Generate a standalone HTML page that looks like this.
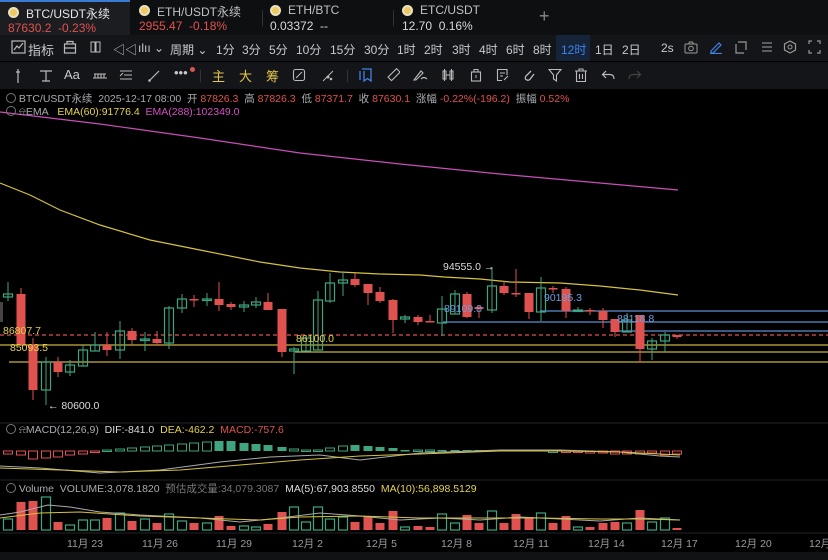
<!DOCTYPE html>
<html><head><meta charset="utf-8">
<style>
*{margin:0;padding:0;box-sizing:border-box}
body{width:828px;height:560px;background:#000;overflow:hidden;font-family:"Liberation Sans","Noto Sans CJK SC",sans-serif;color:#c8c9cc;position:relative}
.abs{position:absolute;white-space:nowrap}
#tabs{position:absolute;left:0;top:0;width:828px;height:35px;background:#0e0f11}
.tab{position:absolute;top:0;height:35px}
.tab .n{position:absolute;left:26px;top:3px;font-size:12px;color:#bfc1c5}
.tab .p{position:absolute;left:8px;top:19px;font-size:12px}
.coin{position:absolute;left:8px;top:5px;width:11px;height:11px;border-radius:50%;background:#f0c861;border:2px solid #e9e1c4}
#r2{position:absolute;left:0;top:35px;width:828px;height:26px;background:#141518}
#r3{position:absolute;left:0;top:62px;width:828px;height:27px;background:#141518}
.t{position:absolute;top:6px;font-size:12px;color:#c8c9cc}
.y{color:#e6c74a}
.red{color:#e0524f}
.info{font-size:10.5px;color:#a9abaf}
</style></head><body>
<div id="tabs">
 <div class="tab" style="left:0;width:130px;background:#1c1d20;border-top:2px solid #3a7bd5"><div class="coin"></div><div class="n" style="color:#e4e5e7">BTC/USDT永续</div><div class="p red">87630.2&nbsp; -0.23%</div></div>
 <div class="tab" style="left:131px;width:130px"><div class="coin"></div><div class="n">ETH/USDT永续</div><div class="p red">2955.47&nbsp; -0.18%</div></div>
 <div class="abs" style="left:262px;top:10px;width:1px;height:16px;background:#333"></div>
 <div class="tab" style="left:262px;width:130px"><div class="coin"></div><div class="n">ETH/BTC</div><div class="p" style="color:#d8d9dc">0.03372&nbsp; --</div></div>
 <div class="abs" style="left:393px;top:10px;width:1px;height:16px;background:#333"></div>
 <div class="tab" style="left:394px;width:130px"><div class="coin"></div><div class="n">ETC/USDT</div><div class="p" style="color:#d8d9dc">12.70&nbsp; 0.16%</div></div>
 <div class="abs" style="left:539px;top:6px;font-size:18px;color:#888">+</div>
</div>
<div id="r2">
 <svg class="abs" style="left:11px;top:5px" width="15" height="14"><rect x="1" y="1" width="13" height="12" fill="none" stroke="#bbb" stroke-width="1.2"/><path d="M3 10 L6 6 L8 8 L12 3" fill="none" stroke="#bbb" stroke-width="1.2"/></svg>
 <div class="t" style="left:28px;top:5px;font-size:13px">指标</div>
 <svg class="abs" style="left:63px;top:5px" width="14" height="14"><rect x="1.5" y="4" width="11" height="9" fill="none" stroke="#bbb" stroke-width="1.2"/><path d="M4 4 V1.5 H10 V4 M1.5 8 H12.5" fill="none" stroke="#bbb" stroke-width="1.2"/></svg>
 <svg class="abs" style="left:90px;top:5px" width="12" height="14"><rect x="1" y="2" width="4" height="10" fill="none" stroke="#bbb"/><rect x="6" y="2" width="4" height="10" fill="none" stroke="#bbb"/></svg>
 <div class="t" style="left:113px;font-size:12px">◁◁</div>
 <div class="t" style="left:138px">ılıı ⌄</div>
 <div class="t" style="left:170px">周期 ⌄</div>
 <div class="t" style="left:216px">1分</div><div class="t" style="left:242px">3分</div><div class="t" style="left:269px">5分</div><div class="t" style="left:296px">10分</div><div class="t" style="left:330px">15分</div><div class="t" style="left:364px">30分</div><div class="t" style="left:397px">1时</div><div class="t" style="left:424px">2时</div><div class="t" style="left:452px">3时</div><div class="t" style="left:479px">4时</div><div class="t" style="left:506px">6时</div><div class="t" style="left:533px">8时</div>
 <div class="abs" style="left:556px;top:0;width:34px;height:26px;background:#16243a"></div>
 <div class="t" style="left:561px;color:#3f82e8">12时</div>
 <div class="t" style="left:595px">1日</div><div class="t" style="left:622px">2日</div>
 <div class="t" style="left:661px">2s</div>
 <svg class="abs" style="left:684px;top:6px" width="14" height="13"><rect x="1" y="3" width="12" height="9" rx="1" fill="none" stroke="#999"/><circle cx="7" cy="7.5" r="2.3" fill="none" stroke="#999"/><path d="M4.5 3 L5.5 1 H8.5 L9.5 3" fill="none" stroke="#999"/></svg>
 <svg class="abs" style="left:709px;top:5px" width="14" height="14"><path d="M2 11 L10 3 L12 5 L4 13 H2 Z M1 13.5 H13" fill="none" stroke="#3f82e8" stroke-width="1.2"/></svg>
 <svg class="abs" style="left:734px;top:5px" width="14" height="14"><path d="M4 2 H12 V10 M2 4 V13 H10" fill="none" stroke="#999" stroke-width="1.2"/></svg>
 <svg class="abs" style="left:761px;top:6px" width="12" height="12"><path d="M1 2H11M1 6H11M1 10H11" stroke="#888" stroke-width="1.2"/></svg>
 <svg class="abs" style="left:783px;top:5px" width="14" height="14"><path d="M7 1 L12.5 4 V10 L7 13 L1.5 10 V4 Z" fill="none" stroke="#999" stroke-width="1.2"/><circle cx="7" cy="7" r="2" fill="none" stroke="#999"/></svg>
 <svg class="abs" style="left:808px;top:5px" width="13" height="14"><path d="M1 4V1H4M9 1H12V4M12 10V13H9M4 13H1V10" fill="none" stroke="#999" stroke-width="1.2"/></svg>
</div>
<div id="r3">
 <svg class="abs" style="left:14px;top:6px" width="8" height="16"><path d="M4 1V15M2 4H6" stroke="#bbb" stroke-width="1.2"/></svg>
 <svg class="abs" style="left:39px;top:7px" width="14" height="14"><path d="M1 2H13M7 2V12M3 12H11" stroke="#bbb" stroke-width="1.2"/></svg>
 <div class="t" style="left:64px;top:5px;font-size:13px">Aa</div>
 <svg class="abs" style="left:92px;top:8px" width="16" height="10"><path d="M1 8H15M2 4H14M3 4V8M6 4V8M9 4V8M12 4V8" stroke="#bbb" stroke-width="1.1"/></svg>
 <svg class="abs" style="left:119px;top:7px" width="14" height="12"><path d="M1 2H13M5 6H13M1 10H13M1 7L4 4" stroke="#bbb" stroke-width="1.1"/></svg>
 <svg class="abs" style="left:147px;top:7px" width="14" height="14"><path d="M2 12L12 2" stroke="#bbb" stroke-width="1.2"/><circle cx="2.5" cy="11.5" r="1.3" fill="#bbb"/></svg>
 <div class="t" style="left:174px;top:3px;font-size:13px">•••</div>
 <div class="abs" style="left:190px;top:5px;width:5px;height:5px;border-radius:50%;background:#e0524f"></div>
 <div class="abs" style="left:200px;top:8px;width:1px;height:12px;background:#333"></div>
 <div class="t y" style="left:212px;top:4px;font-size:13px">主</div>
 <div class="t y" style="left:239px;top:4px;font-size:13px">大</div>
 <div class="t y" style="left:266px;top:4px;font-size:13px">筹</div>
 <svg class="abs" style="left:292px;top:6px" width="14" height="14"><rect x="1.5" y="1.5" width="11" height="11" rx="2" fill="none" stroke="#bbb" stroke-width="1.1"/><path d="M4 10L10 4" stroke="#bbb"/></svg>
 <svg class="abs" style="left:321px;top:7px" width="14" height="14"><path d="M2 12L12 2" stroke="#bbb"/><circle cx="7" cy="8" r="1.5" fill="#bbb"/><circle cx="10" cy="10" r="1.3" fill="#bbb"/></svg>
 <div class="abs" style="left:347px;top:8px;width:1px;height:12px;background:#333"></div>
 <svg class="abs" style="left:359px;top:6px" width="14" height="15"><path d="M3 1H12V13L8.5 10.5L5 13V3 M1 3V12" fill="none" stroke="#3f82e8" stroke-width="1.3"/></svg>
 <svg class="abs" style="left:386px;top:6px" width="14" height="14"><rect x="2" y="5" width="12" height="5" transform="rotate(-45 7 7)" fill="none" stroke="#bbb" stroke-width="1.1"/></svg>
 <svg class="abs" style="left:412px;top:6px" width="16" height="14"><path d="M2 12L9 3L11 5L4 12Z M9 11Q12 8 15 11" fill="none" stroke="#bbb" stroke-width="1.1"/></svg>
 <svg class="abs" style="left:440px;top:6px" width="16" height="14"><rect x="3" y="3" width="3" height="8" fill="none" stroke="#bbb"/><rect x="10" y="3" width="3" height="8" fill="none" stroke="#bbb"/><path d="M4.5 1V13M11.5 1V13M6 7H10" stroke="#bbb"/></svg>
 <svg class="abs" style="left:470px;top:6px" width="12" height="15"><rect x="1.5" y="4" width="9" height="9" fill="none" stroke="#bbb" stroke-width="1.1"/><path d="M6 7V10M4 4V1.5H8V4" fill="none" stroke="#bbb"/></svg>
 <svg class="abs" style="left:496px;top:6px" width="14" height="14"><path d="M11 7V1.5H1.5V12.5H6 M4 5H9M4 8H7M8 12L12 8" fill="none" stroke="#bbb" stroke-width="1.1"/></svg>
 <svg class="abs" style="left:522px;top:6px" width="14" height="14"><path d="M9 3L4 8Q2 11 5 12Q7 13 9 10L12 6" fill="none" stroke="#bbb" stroke-width="1.3"/></svg>
 <svg class="abs" style="left:548px;top:6px" width="14" height="14"><path d="M1 1.5H13L8.5 7V13L5.5 11V7Z" fill="none" stroke="#bbb" stroke-width="1.1"/></svg>
 <svg class="abs" style="left:574px;top:6px" width="14" height="15"><path d="M1 3H13M5 3V1H9V3M2.5 3V13.5H11.5V3M5.5 6V11M8.5 6V11" fill="none" stroke="#bbb" stroke-width="1.1"/></svg>
 <svg class="abs" style="left:601px;top:8px" width="14" height="10"><path d="M5 1L1.5 4.5L5 8M1.5 4.5H9Q13 4.5 13 9" fill="none" stroke="#bbb" stroke-width="1.2"/></svg>
 <svg class="abs" style="left:628px;top:8px" width="14" height="10"><path d="M9 1L12.5 4.5L9 8M12.5 4.5H5Q1 4.5 1 9" fill="none" stroke="#444" stroke-width="1.2"/></svg>
</div>

<svg class="abs" style="left:0;top:89px" width="828" height="471" id="ch"></svg>

<div class="abs info" style="left:6px;top:91px"><span style="display:inline-block;width:10px;height:10px;border:1px solid #777;border-radius:50%;vertical-align:-1px"></span> BTC/USDT永续&nbsp; 2025-12-17 08:00&nbsp; 开 <span class="red">87826.3</span>&nbsp; 高 <span class="red">87826.3</span>&nbsp; 低 <span class="red">87371.7</span>&nbsp; 收 <span class="red">87630.1</span>&nbsp; 涨幅 <span class="red">-0.22%(-196.2)</span>&nbsp; 振幅 <span class="red">0.52%</span></div>
<div class="abs info" style="left:6px;top:106px"><span style="display:inline-block;width:10px;height:10px;border:1px solid #777;border-radius:50%;vertical-align:-1px"></span> ⍾EMA&nbsp;&nbsp; <span style="color:#e6d34a">EMA(60):91776.4</span>&nbsp; <span style="color:#d34fc4">EMA(288):102349.0</span></div>
<div class="abs info" style="left:6px;top:424px"><span style="display:inline-block;width:10px;height:10px;border:1px solid #777;border-radius:50%;vertical-align:-1px"></span> ⍾MACD(12,26,9)&nbsp; <span style="color:#ddd">DIF:-841.0</span>&nbsp; <span style="color:#e6d34a">DEA:-462.2</span>&nbsp; <span class="red">MACD:-757.6</span></div>
<div class="abs info" style="left:6px;top:481px"><span style="display:inline-block;width:10px;height:10px;border:1px solid #777;border-radius:50%;vertical-align:-1px"></span> Volume&nbsp; VOLUME:3,078.1820&nbsp; <span style="color:#777">预估成交量:34,079.3087</span>&nbsp; <span style="color:#ddd">MA(5):67,903.8550</span>&nbsp; <span style="color:#e6d34a">MA(10):56,898.5129</span></div>
<div class="abs" style="left:0;top:552px;width:828px;height:8px;background:#111214"></div>

<script>
var C=[[8,294,297,282,301,'g'],[21,294,345,288,345,'r'],[33,345,390,338,400,'r'],[46,362,390,357,405,'g'],[58,362,372,357,377,'r'],[70,365,372,360,376,'g'],[83,350,366,345,366,'g'],[95,345,351,332,351,'g'],[107,345,350,332,356,'r'],[120,331,350,321,359,'g'],[132,331,340,328,345,'r'],[145,339,340,332,351,'g'],[157,339,343,331,345,'r'],[169,308,343,306,349,'g'],[182,299,308,294,313,'g'],[194,299,300,295,307,'r'],[207,299,300,293,306,'g'],[219,299,305,282,311,'r'],[231,304,307,302,310,'r'],[244,305,307,301,312,'g'],[256,302,305,297,308,'g'],[268,302,310,293,310,'r'],[282,309,352,309,357,'r'],[294,349,351,347,374,'g'],[306,338,351,336,351,'g'],[318,300,350,291,350,'g'],[330,283,301,273,303,'g'],[343,280,283,272,296,'g'],[355,279,285,273,287,'r'],[368,284,293,284,305,'r'],[380,292,301,287,303,'r'],[393,300,320,299,333,'r'],[405,317,319,315,323,'g'],[418,317,322,315,325,'r'],[430,321,322,315,322,'r'],[442,309,323,296,336,'g'],[455,294,314,290,314,'g'],[467,294,317,292,318,'r'],[479,307,309,305,318,'r'],[492,286,310,267,313,'g'],[504,286,293,281,295,'r'],[516,293,294,269,297,'r'],[529,293,312,293,319,'r'],[541,288,312,277,321,'g'],[553,288,289,286,293,'r'],[566,289,311,287,318,'r'],[578,310,311,307,312,'g'],[590,310,311,308,315,'r'],[603,311,320,308,328,'r'],[615,319,332,319,337,'r'],[627,320,332,313,332,'g'],[640,315,349,315,362,'r'],[652,341,349,338,360,'g'],[665,335,341,332,352,'g'],[677,335,337,335,339,'r']];
var V=[[8,519,'g'],[21,502,'r'],[33,501,'r'],[46,497,'g'],[58,522,'r'],[70,525,'g'],[83,520,'g'],[95,520,'g'],[107,518,'r'],[120,513,'g'],[132,521,'r'],[145,519,'g'],[157,523,'r'],[169,514,'g'],[182,521,'g'],[194,523,'r'],[207,523,'g'],[219,516,'r'],[231,526,'r'],[244,526,'g'],[256,527,'g'],[268,524,'r'],[282,512,'r'],[294,507,'g'],[306,522,'g'],[318,507,'g'],[330,519,'g'],[343,517,'g'],[355,522,'r'],[368,517,'r'],[380,523,'r'],[393,511,'r'],[405,527,'g'],[418,526,'r'],[430,527,'r'],[442,514,'g'],[455,523,'g'],[467,515,'r'],[479,523,'r'],[492,511,'g'],[504,523,'r'],[516,514,'r'],[529,517,'r'],[541,513,'g'],[553,523,'r'],[566,516,'r'],[578,527,'g'],[590,527,'r'],[603,523,'r'],[615,522,'r'],[627,523,'g'],[640,510,'r'],[652,522,'g'],[665,518,'g'],[677,528,'r']];
var R='#e0524f',G='#3fa57f',o=89,s='';
function L(pts,c,w){s+='<polyline fill="none" stroke="'+c+'" stroke-width="'+(w||1.2)+'" points="'+pts.map(function(p){return p[0]+','+(p[1]-o)}).join(' ')+'"/>';}
function H(x1,x2,y,c,d){s+='<line x1="'+x1+'" x2="'+x2+'" y1="'+(y-o)+'" y2="'+(y-o)+'" stroke="'+c+'" stroke-width="1.3"'+(d?' stroke-dasharray="4,3"':'')+'/>';}
function T(x,y,t,c,sz){s+='<text x="'+x+'" y="'+(y-o)+'" fill="'+c+'" font-size="'+(sz||10.5)+'" font-family="Liberation Sans,Noto Sans CJK SC,sans-serif">'+t+'</text>';}
H(0,828,423,'#1c1d20');H(0,828,480,'#1c1d20');H(0,828,533,'#1c1d20');
L([[0,112],[100,124],[200,138],[300,153],[400,164],[500,174],[600,183],[678,190]],'#c94fb8');
L([[0,183],[30,195],[60,210],[100,225],[150,240],[200,250],[260,262],[300,268],[340,272],[380,274],[420,275],[444,277],[480,279],[510,282],[560,283],[600,286],[640,290],[678,295]],'#d6c23c');
H(0,828,335,R,1);H(0,828,345,'#c8b43c');H(295,828,352,'#c8b43c');H(9,828,362,'#c8b43c');
H(540,828,311,'#5b8fd0');H(443,828,322,'#5b8fd0');H(617,828,331,'#5b8fd0');
C.forEach(function(c){var col=c[5]=='g'?G:R;s+='<line x1="'+c[0]+'" x2="'+c[0]+'" y1="'+(c[3]-o)+'" y2="'+(c[4]-o)+'" stroke="'+col+'"/>';var h=Math.max(1.5,c[2]-c[1]);if(c[5]=='g')s+='<rect x="'+(c[0]-4.5)+'" y="'+(c[1]-o)+'" width="9" height="'+h+'" fill="none" stroke="'+G+'" stroke-width="1.2"/>';else s+='<rect x="'+(c[0]-4.5)+'" y="'+(c[1]-o)+'" width="9" height="'+h+'" fill="'+R+'"/>';});
T(3,334,'86807.7','#e6d34a');T(10,351,'85093.5','#e6d34a');T(296,342,'86100.0','#e6d34a');
T(444,312,'89109.8','#6a9fe0');T(544,301,'90195.3','#6a9fe0');T(617,322,'88118.8','#6a9fe0');
T(443,270,'94555.0 →','#ddd');T(48,409,'← 80600.0','#ddd');
s+='<rect x="0" y="'+(302-o)+'" width="3" height="20" fill="#444"/>';
var mz=451;
C.forEach(function(c,i){var x=c[0];
 var v=[ -3,-4,-8,-7,-6,-4,-3,-1, 1,2,3,4,5,6,7,8,9,10,10,8,7,6,4,2,1,1,3,5,6,5,4,3,1,1,1,1,1,1,1,1,1,1,1,1,0,-1,-1,-2,-2,-3,-3,-3,-2,-4,-3][i]||0;
 var col=v>=0?G:R,fill=(i>=17&&i<=22)||(i>=28&&i<=32)||i>=35&&i<44;var y=v>=0?mz-v:mz,hh=Math.max(1.5,Math.abs(v));
 s+='<rect x="'+(x-4.5)+'" y="'+(y-o)+'" width="9" height="'+hh+'" '+(fill?'fill="'+col+'"':'fill="none" stroke="'+col+'"')+'/>';});
L([[0,466],[40,468],[100,473],[160,470],[220,462],[270,457],[320,455],[360,460],[420,453],[500,450],[560,450],[620,452],[660,456],[680,457]],'#aaa',1);
L([[0,468],[60,470],[120,472],[180,470],[240,465],[300,460],[360,456],[420,454],[500,451],[560,451],[620,452],[680,455]],'#d6c23c',1);
V.forEach(function(v){var h=530-v[1];if(v[2]=='g')s+='<rect x="'+(v[0]-4.5)+'" y="'+(v[1]-o)+'" width="9" height="'+h+'" fill="none" stroke="'+G+'" stroke-width="1.2"/>';else s+='<rect x="'+(v[0]-4.5)+'" y="'+(v[1]-o)+'" width="9" height="'+h+'" fill="'+R+'"/>';});
L([[0,515],[20,512],[48,505],[70,507],[100,512],[140,515],[200,518],[240,522],[280,518],[320,513],[360,516],[400,520],[440,518],[480,520],[520,517],[560,519],[600,521],[640,518],[680,520]],'#aaa',1);
L([[0,518],[40,513],[80,512],[140,516],[200,518],[260,520],[300,517],[360,516],[420,518],[480,518],[540,518],[600,519],[640,519],[680,520]],'#d6c23c',1);
[['11月 23',67],['11月 26',142],['11月 29',216],['12月 2',292],['12月 5',366],['12月 8',441],['12月 11',513],['12月 14',588],['12月 17',661],['12月 20',735],['12月',809]].forEach(function(d){T(d[1],547,d[0],'#9a9ca0',10.5)});
document.getElementById('ch').innerHTML=s;
</script>
</body></html>
